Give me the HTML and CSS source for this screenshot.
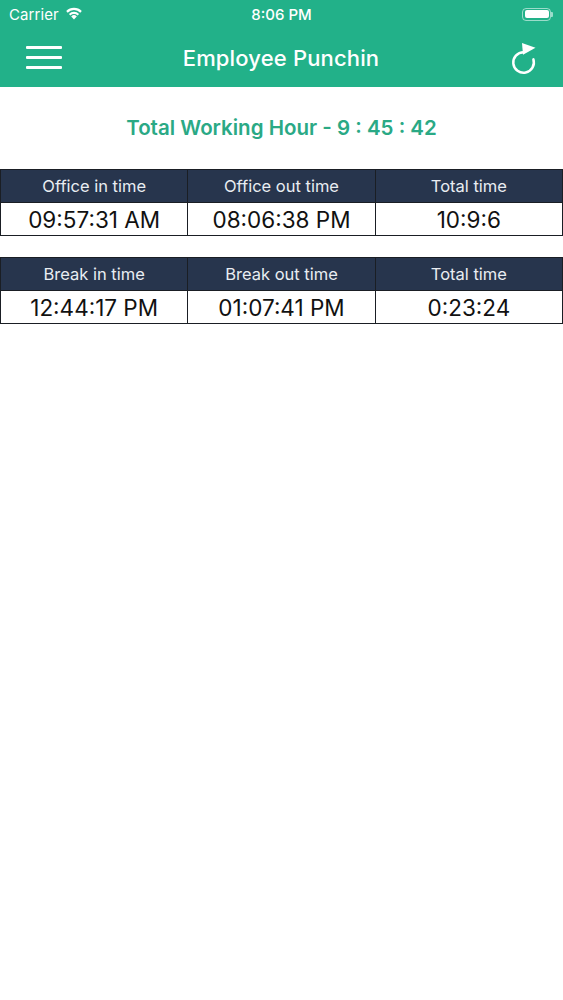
FILE: index.html
```html
<!DOCTYPE html>
<html>
<head>
<meta charset="utf-8">
<link rel="stylesheet" href="styles.css">
</head>
<body>
<header class="appbar">
  <div class="status">
    <div class="status-left">
      <span class="carrier">Carrier</span>
      <svg class="wifi" width="18" height="13" viewBox="0 0 18 13">
        <path d="M9 12.5 L6.2 9.4 A4 4 0 0 1 11.8 9.4 Z" fill="#fff"/>
        <path d="M3.9 6.9 A7.3 7.3 0 0 1 14.1 6.9 L12.6 8.5 A5.2 5.2 0 0 0 5.4 8.5 Z" fill="#fff"/>
        <path d="M1.2 4.1 A11 11 0 0 1 16.8 4.1 L15.3 5.7 A8.9 8.9 0 0 0 2.7 5.7 Z" fill="#fff"/>
      </svg>
    </div>
    <span class="clock">8:06 PM</span>
    <div class="status-right">
      <span class="battery"><span class="battery-fill"></span></span><span class="battery-cap"></span>
    </div>
  </div>
  <nav class="navbar">
    <button class="menu" aria-label="menu">
      <span></span><span></span><span></span>
    </button>
    <h1 class="title">Employee Punchin</h1>
    <button class="refresh" aria-label="refresh">
      <svg width="35" height="36" viewBox="505 40 35 36">
        <path d="M523.5 52.2 A10.3 10.3 0 1 0 533.4 59.4" fill="none" stroke="#fff" stroke-width="2.5" stroke-linecap="round"/>
        <path d="M522 43 L535.5 47.8 L523 54.8 Z" fill="#fff"/>
      </svg>
    </button>
  </nav>
</header>

<main class="content">
  <h2 class="total">Total Working Hour - 9 : 45 : 42</h2>

  <table class="times">
    <tr class="head"><th>Office in time</th><th>Office out time</th><th>Total time</th></tr>
    <tr class="row"><td>09:57:31 AM</td><td>08:06:38 PM</td><td>10:9:6</td></tr>
  </table>

  <table class="times">
    <tr class="head"><th>Break in time</th><th>Break out time</th><th>Total time</th></tr>
    <tr class="row"><td>12:44:17 PM</td><td>01:07:41 PM</td><td>0:23:24</td></tr>
  </table>
</main>
</body>
</html>
```

FILE: styles.css
```css
* { box-sizing: border-box; }
html, body { margin: 0; padding: 0; background: #fff; }
body {
  width: 563px;
  font-family: Inter, "Liberation Sans", sans-serif;
  color: #000;
}

.appbar { background: #22b189; color: #fff; }

.status {
  height: 28px;
  display: flex;
  align-items: center;
  justify-content: space-between;
  padding: 0 10px 0 9px;
  position: relative;
  font-size: 15px;
}
.status-left { display: flex; align-items: center; gap: 6px; }
.carrier { letter-spacing: 0.1px; }
.wifi { margin-top: -2px; }
.clock {
  position: absolute;
  left: 0; right: 0;
  text-align: center;
  font-weight: 500;
  pointer-events: none;
}
.status-right { display: flex; align-items: center; }
.battery {
  width: 29px; height: 13px;
  border: 1px solid rgba(255,255,255,0.55);
  border-radius: 4px;
  padding: 1.5px;
  display: flex;
}
.battery-fill { flex: 1; background: #fff; border-radius: 2px; }
.battery-cap {
  width: 2px; height: 5px;
  background: rgba(255,255,255,0.55);
  border-radius: 0 1px 1px 0;
}

.navbar {
  height: 59px;
  display: grid;
  grid-template-columns: 1fr auto 1fr;
  align-items: center;
  padding: 0 23px 0 26px;
}
.menu {
  justify-self: start;
  width: 36px; height: 24px;
  background: none; border: 0; padding: 0;
  display: flex; flex-direction: column; justify-content: space-between;
}
.menu span { display: block; height: 3.4px; background: #fff; border-radius: 1px; }
.title {
  margin: 0 0 0 -4px;
  font-size: 22px;
  font-weight: 500;
  letter-spacing: 0.15px;
}
.refresh {
  justify-self: end;
  background: none; border: 0; padding: 0;
  width: 35px; height: 36px;
}
.refresh svg { display: block; }

.content { padding-top: 29px; }
.total {
  margin: 0 0 29px;
  text-align: center;
  color: #2aa985;
  font-size: 20.5px;
  font-weight: 600;
  line-height: 24px;
}

.times {
  width: 563px;
  border-collapse: collapse;
  table-layout: fixed;
  margin-bottom: 21px;
}
.times th, .times td {
  border: 1px solid #1a1e24;
  text-align: center;
  padding: 0;
}
.times tr.head th {
  background: #27354d;
  color: #e9edf2;
  font-weight: 400;
  font-size: 16.5px;
  height: 33px;
}
.times tr.row td {
  font-size: 22.5px;
  height: 33px;
  padding-top: 1px;
  color: #111;
}
```
